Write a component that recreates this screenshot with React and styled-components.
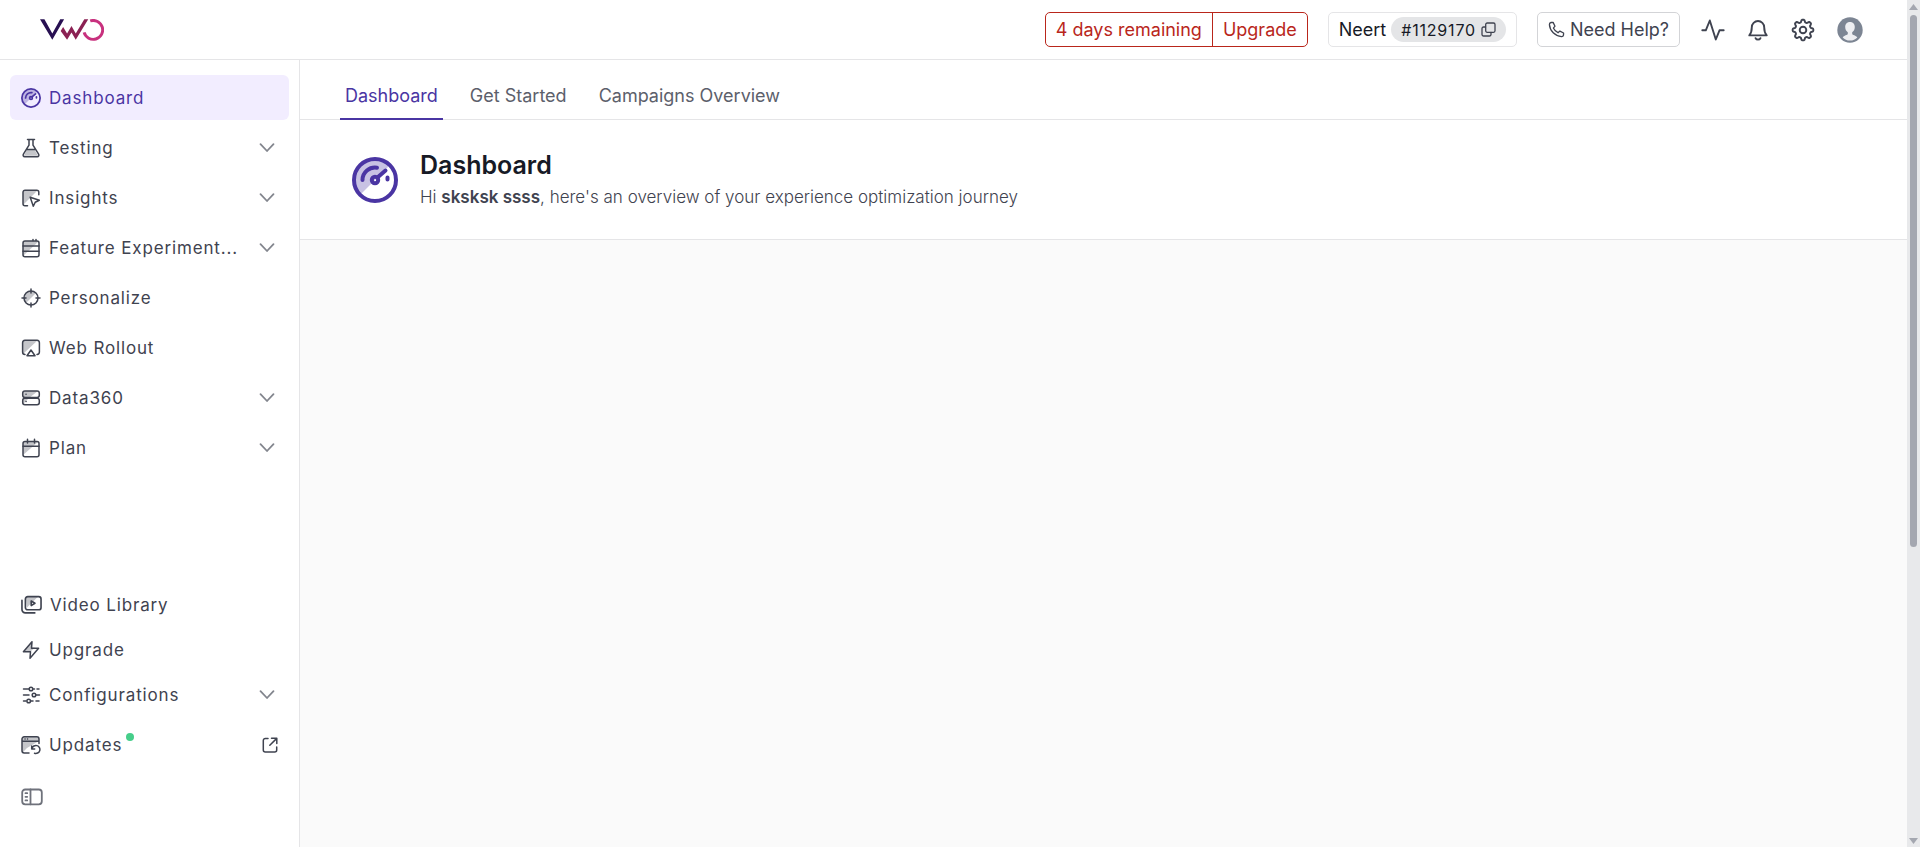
import React from "react";
import styled, { createGlobalStyle } from "styled-components";

const ink = "#3f4350";
const violet = "#4a35a3";
const line = "#e5e5e7";

const GlobalStyle = createGlobalStyle`
  *, *::before, *::after { box-sizing: border-box; }
  body { margin: 0; background: #fff; color: ${ink}; font-family: Inter, "Liberation Sans", sans-serif; font-size: 18px; }
  button { font: inherit; color: inherit; background: none; border: 0; padding: 0; cursor: pointer; }
  a { color: inherit; text-decoration: none; }
`;

const Shell = styled.div`
  display: grid;
  grid-template-columns: minmax(0, 1fr) 13px;
  min-height: 100vh;
`;
const Page = styled.div`
  display: flex;
  flex-direction: column;
`;
const Header = styled.header`
  display: flex;
  align-items: center;
  gap: 20px;
  height: 60px;
  padding: 0 42px 0 40px;
  border-bottom: 1px solid ${line};
`;
const Brand = styled.a`
  display: flex;
  margin-right: auto;
`;
const Trial = styled.div`
  display: flex;
  height: 35px;
  color: #b9261b;
  border: 1px solid #b9261b;
  border-radius: 5px;
`;
const TrialButton = styled.button`
  padding: 0 10px;
  & + & { border-left: 1px solid #b9261b; }
`;
const Account = styled.div`
  display: flex;
  align-items: center;
  gap: 5px;
  height: 35px;
  padding: 0 10px;
  border: 1px solid ${line};
  border-radius: 5px;
  color: #171a26;
`;
const AccountId = styled.button`
  display: flex;
  align-items: center;
  gap: 5px;
  height: 25px;
  padding: 0 10px;
  border-radius: 13px;
  background: #e4e5e7;
  font-size: 16px;
  letter-spacing: 0.05em;
  svg { color: ${ink}; }
`;
const HelpButton = styled.button`
  display: flex;
  align-items: center;
  gap: 5px;
  height: 35px;
  padding: 0 10px;
  border: 1px solid #d3d4d7;
  border-radius: 5px;
`;
const IconButton = styled.button`
  display: flex;
  align-items: center;
  justify-content: center;
  width: ${(p) => (p.$wide ? 30 : 25)}px;
  height: 30px;
`;
const Body = styled.div`
  display: grid;
  grid-template-columns: 300px minmax(0, 1fr);
  flex: 1;
`;
const Sidebar = styled.aside`
  display: flex;
  flex-direction: column;
  justify-content: space-between;
  padding: 15px 10px 20px;
  border-right: 1px solid ${line};
`;
const Nav = styled.nav`
  display: flex;
  flex-direction: column;
  gap: ${(p) => p.$gap}px;
`;
const NavItem = styled.a`
  display: flex;
  align-items: center;
  gap: 8px;
  height: 45px;
  padding: 0 11px;
  border-radius: 6px;
  font-size: 17px;
  letter-spacing: 0.05em;
  color: ${(p) => (p.$active ? violet : ink)};
  background: ${(p) => (p.$active ? "#f2edff" : "transparent")};
  ${(p) => p.$spaced && "margin-top: 5px;"}
`;
const NavLabel = styled.span`
  display: flex;
  gap: 4px;
  flex: 1;
  line-height: 24px;
  white-space: nowrap;
`;
const Dot = styled.i`
  width: 8px;
  height: 8px;
  border-radius: 50%;
  background: #46ce8a;
`;
const Trailing = styled.span`
  display: flex;
  justify-content: flex-end;
  padding-right: ${(p) => (p.$external ? 0 : 2)}px;
`;
const Collapse = styled.button`
  display: flex;
  align-items: center;
  height: 60px;
  padding: 0 11px;
`;
const Main = styled.main`
  display: flex;
  flex-direction: column;
  background: #fafafa;
`;
const Tabs = styled.nav`
  display: flex;
  gap: 22px;
  height: 60px;
  padding: 0 40px;
  background: #fff;
  border-bottom: 1px solid ${line};
`;
const Tab = styled.a`
  display: flex;
  align-items: center;
  height: 60px;
  padding: 24px 5px 12px;
  border-bottom: 2px solid ${(p) => (p.$active ? violet : "transparent")};
  color: ${(p) => (p.$active ? violet : "#5c606b")};
`;
const Intro = styled.section`
  display: flex;
  align-items: center;
  gap: 22px;
  height: 120px;
  padding: 0 52px;
  background: #fff;
  border-bottom: 1px solid ${line};
`;
const IntroIcon = styled.span`
  display: flex;
  color: ${violet};
`;
const Title = styled.h1`
  margin: 0;
  font-size: 25px;
  line-height: 36px;
  font-weight: 600;
  color: #171a26;
`;
const Subtitle = styled.p`
  margin: 0;
  font-size: 17px;
  line-height: 29px;
  font-weight: 300;
  b { font-weight: 600; }
`;
const ScrollTrack = styled.div`
  display: flex;
  flex-direction: column;
  align-items: center;
  gap: 5px;
  padding: 4px 0 3px;
  background: #e8e9eb;
`;
const ScrollThumb = styled.div`
  width: 7px;
  flex: 0 0 63.3%;
  border-radius: 4px;
  background: #a4a7b0;
`;
const ScrollSpace = styled.div`
  flex: 1;
`;

const Svg = ({ w = 20, h = w, vw = w, vh = h, sw = 1.5, children }) => (
  <svg width={w} height={h} viewBox={`0 0 ${vw} ${vh}`} fill="none" stroke="currentColor"
    strokeWidth={sw} strokeLinecap="round" strokeLinejoin="round" aria-hidden="true">
    {children}
  </svg>
);
const Tint = ({ d }) => <path d={d} fill="currentColor" stroke="none" opacity="0.3" />;

const Logo = () => (
  <svg width="64" height="22" viewBox="0 0 65 22" aria-label="VWO" role="img">
    <path d="M0 0H4.5L12.5 14.5L20 1L20.5 0H24.5L12.5 21Z" fill="#281052" />
    <path d="M21 12L23.5 8L27.5 14.5L32 7L36.3 14.5L45 0H49L36.3 21L32 13.5L27.5 21Z" fill="#8b2153" />
    <path d="M51 1.8A9.6 9.6 0 1 1 44.8 13.5" fill="none" stroke="#c8317e" strokeWidth="3" />
  </svg>
);
const Gauge = ({ size }) => (
  <Svg w={size} vw={46} vh={46} sw={4}>
    <Tint d="M8 38A21 21 0 1 1 38 8Z" />
    <circle cx="23" cy="23" r="21" />
    <path d="M10.5 23A12.5 12.5 0 0 1 25 10.7M33.5 13.5L26 20M35.5 20.5V22.5" />
    <circle cx="23" cy="23" r="3.2" />
  </Svg>
);
const Flask = () => (
  <Svg>
    <Tint d="M5.8 11.5H13.5L17 17.8H3Z" />
    <path d="M6.5 1.5H13.5M8 1.5V7.2L2.4 16.2C1.7 17.5 2.3 18.7 3.7 18.7H16.3C17.7 18.7 18.3 17.5 17.6 16.2L12 7.2V1.5M5.5 11.5H14.5" />
  </Svg>
);
const Insights = () => (
  <Svg>
    <Tint d="M2 2H17L2 17Z" />
    <path d="M6.5 17.8H4A2 2 0 0 1 2 15.8V4.2A2 2 0 0 1 4 2.2H15.8A2 2 0 0 1 17.8 4.2V6.8" />
    <path d="M9.2 9.2L18.3 12.3L14.2 14.2L12.3 18.3Z" />
  </Svg>
);
const Feature = () => (
  <Svg>
    <Tint d="M2 3H18L2 18Z" />
    <rect x="2" y="3" width="16" height="15.7" rx="2" />
    <path d="M2 8H18M2 13.2H18M12 1.5V2.5M15 1.5V2.5" />
  </Svg>
);
const Target = () => (
  <Svg>
    <Tint d="M5 15A7 7 0 1 1 15 5Z" />
    <circle cx="10" cy="10" r="7" />
    <path d="M10 1V5M10 15V19M1 10H5M15 10H19" />
  </Svg>
);
const Rollout = () => (
  <Svg>
    <Tint d="M2 2H17L2 16Z" />
    <path d="M4 16.5A2.5 2.5 0 0 1 1.6 14V4.8A2.5 2.5 0 0 1 4 2.3H16A2.5 2.5 0 0 1 18.4 4.8V14A2.5 2.5 0 0 1 16 16.5M10 12L14 17.8H6Z" />
  </Svg>
);
const Data = () => (
  <Svg>
    <Tint d="M2 3H17L8 10L2 16Z" />
    <rect x="1.7" y="3" width="16.6" height="6.5" rx="2.2" />
    <rect x="1.7" y="10.3" width="16.6" height="6.5" rx="2.2" />
    <path d="M5 6.2H5.1M5 13.6H5.1" />
  </Svg>
);
const Plan = () => (
  <Svg>
    <Tint d="M2 4H17L2 17Z" />
    <rect x="2" y="3.4" width="16" height="15.4" rx="2" />
    <path d="M2 8.2H18M6.5 1.2V5M13.5 1.2V5" />
  </Svg>
);
const Video = () => (
  <Svg w={21} h={20} vw={22} vh={20} sw={1.7}>
    <Tint d="M5 1H18L6 13Z" />
    <rect x="4.6" y="1.2" width="16.4" height="13.8" rx="2.5" />
    <path d="M1 5V14.5A3.6 3.6 0 0 0 4.6 18.3H14.5M10.7 5.8V10.6L14.6 8.2Z" />
  </Svg>
);
const Bolt = () => (
  <Svg>
    <Tint d="M10 2V7.5H14L9 12H3Z" />
    <path d="M11 1.7L2.4 11.8H9.5L9 18.3L17.6 8.2H10.5Z" />
  </Svg>
);
const Sliders = () => (
  <Svg>
    <path d="M2.5 4H8M12.5 4H13.5M16 4H18M2.5 10H8M15.2 10H18.5M2.5 16H5M10 16H12M15 16H18" />
    <circle cx="10" cy="4" r="1.8" /><circle cx="13" cy="10" r="1.8" /><circle cx="7.7" cy="16" r="1.8" />
  </Svg>
);
const Updates = () => (
  <Svg>
    <Tint d="M1 2H18V6L6 13L1 18Z" />
    <path d="M8 18H3.2A2.2 2.2 0 0 1 1 15.8V4A2.2 2.2 0 0 1 3.2 1.8H15.8A2.2 2.2 0 0 1 18 4V8.5M1 6.2H18M4 4H4.1M6.5 4H6.6" />
    <path d="M10.7 11V14H13.7M11 13.5A4 4 0 1 1 13.5 18.2" />
  </Svg>
);
const Chevron = () => <Svg w={18} h={12} sw={1.8}><g opacity="0.65"><path d="M2.5 2.2L9 9L15.5 2.2" /></g></Svg>;
const External = () => (
  <Svg w={16}>
    <path d="M6 1.5H3.3A2 2 0 0 0 1.3 3.5V13A2 2 0 0 0 3.3 15H12.7A2 2 0 0 0 14.7 13V10M9.5 1.3H14.8V6.5M14.5 1.6L7.8 8.3" />
  </Svg>
);
const Panel = () => (
  <Svg w={22} h={18} sw={1.8}>
    <g opacity="0.75"><rect x="1.2" y="1.5" width="19.6" height="14.8" rx="3" /><path d="M9.5 1.5V16.3M4.5 5.2H6.2M4.5 8.8H6.2M4.5 12.4H6.2" /></g>
  </Svg>
);
const Copy = () => (
  <Svg w={15} sw={1.3}>
    <rect x="4.7" y="1" width="9.3" height="9.3" rx="1.5" />
    <path d="M4.5 5H2.5A1.5 1.5 0 0 0 1 6.5V12.5A1.5 1.5 0 0 0 2.5 14H8.5A1.5 1.5 0 0 0 10 12.5V10.5" />
  </Svg>
);
const Phone = () => (
  <Svg w={17} vw={18} vh={18} sw={1.4}>
    <path d="M3.2 1.6L5.4 1.5L7.4 5.5L5.7 7.5C6.7 9.7 8.4 11.4 10.6 12.4L12.6 10.7L16.5 12.7L16.4 14.9C16.2 16 15.3 16.6 14.2 16.5C7.5 16 2 10.5 1.5 3.8C1.4 2.7 2.1 1.8 3.2 1.6Z" />
  </Svg>
);
const Pulse = () => <Svg w={24} sw={1.9}><path d="M1.3 12.3H4.8L8.8 2.5L14.8 21.5L18.5 12.3H22.7" /></Svg>;
const Bell = () => (
  <Svg w={20} h={22} sw={1.9}>
    <path d="M1.3 16.4C3 14.4 3.8 12.2 3.8 8.2A6.2 6.2 0 0 1 16.2 8.2C16.2 12.2 17 14.4 18.7 16.4ZM7.6 19.2C8.6 21 11.4 21 12.4 19.2" />
  </Svg>
);
const gearOutline = Array.from({ length: 96 }, (_, i) => {
  const angle = (i / 96) * Math.PI * 2;
  const radius = 9.1 + 1.3 * Math.tanh(2 * Math.cos(angle * 8));
  return `${i ? "L" : "M"}${(12 + radius * Math.cos(angle)).toFixed(2)} ${(12 + radius * Math.sin(angle)).toFixed(2)}`;
}).join("") + "Z";
const Gear = () => <Svg w={24} sw={1.9}><path d={gearOutline} /><circle cx="12" cy="12" r="3.3" /></Svg>;
const Avatar = () => (
  <svg width="26" height="26" viewBox="0 0 26 26" aria-hidden="true">
    <circle cx="13" cy="13" r="12.7" fill="#7c8593" />
    <path d="M13 5C9.8 5 8.2 7.2 8.2 10C8.2 12.4 9.3 14.2 10.8 15.3V17C10.8 17.9 6.8 18.4 5.7 20.4C7.5 22.4 10 23.5 13 23.5S18.5 22.4 20.3 20.4C19.2 18.4 15.2 17.9 15.2 17V15.3C16.7 14.2 17.8 12.4 17.8 10C17.8 7.2 16.2 5 13 5Z" fill="#edeef1" />
  </svg>
);
const Arrow = ({ down }) => (
  <svg width="9" height="6" viewBox="0 0 9 6" aria-hidden="true">
    <path d={down ? "M0 0H9L4.5 6Z" : "M0 6H9L4.5 0Z"} fill="#a4a7b0" />
  </svg>
);

const primary = [
  { label: "Dashboard", icon: <Gauge size={20} />, active: true },
  { label: "Testing", icon: <Flask />, expands: true },
  { label: "Insights", icon: <Insights />, expands: true },
  { label: "Feature Experiment...", icon: <Feature />, expands: true },
  { label: "Personalize", icon: <Target /> },
  { label: "Web Rollout", icon: <Rollout /> },
  { label: "Data360", icon: <Data />, expands: true },
  { label: "Plan", icon: <Plan />, expands: true },
];
const secondary = [
  { label: "Video Library", icon: <Video /> },
  { label: "Upgrade", icon: <Bolt /> },
  { label: "Configurations", icon: <Sliders />, expands: true },
  { label: "Updates", icon: <Updates />, external: true, dot: true, spaced: true },
];

const Item = ({ label, icon, active, expands, external, dot, spaced }) => (
  <NavItem href="#" $active={active} $spaced={spaced} aria-current={active ? "page" : undefined}>
    {icon}
    <NavLabel>{label}{dot && <Dot />}</NavLabel>
    {(expands || external) && <Trailing $external={external}>{external ? <External /> : <Chevron />}</Trailing>}
  </NavItem>
);

export default function App() {
  return (
    <Shell>
      <GlobalStyle />
      <Page>
        <Header>
          <Brand href="#"><Logo /></Brand>
          <Trial>
            <TrialButton>4 days remaining</TrialButton>
            <TrialButton>Upgrade</TrialButton>
          </Trial>
          <Account>
            Neert
            <AccountId>#1129170<Copy /></AccountId>
          </Account>
          <HelpButton><Phone />Need Help?</HelpButton>
          <IconButton aria-label="Activity"><Pulse /></IconButton>
          <IconButton aria-label="Notifications"><Bell /></IconButton>
          <IconButton aria-label="Settings"><Gear /></IconButton>
          <IconButton $wide aria-label="Profile"><Avatar /></IconButton>
        </Header>
        <Body>
          <Sidebar>
            <Nav $gap={5} aria-label="Products">
              {primary.map((item) => <Item key={item.label} {...item} />)}
            </Nav>
            <Nav $gap={0} aria-label="Account">
              {secondary.map((item) => <Item key={item.label} {...item} />)}
              <Collapse aria-label="Collapse sidebar"><Panel /></Collapse>
            </Nav>
          </Sidebar>
          <Main>
            <Tabs aria-label="Sections">
              <Tab href="#" $active>Dashboard</Tab>
              <Tab href="#">Get Started</Tab>
              <Tab href="#">Campaigns Overview</Tab>
            </Tabs>
            <Intro>
              <IntroIcon><Gauge size={46} /></IntroIcon>
              <div>
                <Title>Dashboard</Title>
                <Subtitle>Hi <b>sksksk ssss</b>, here's an overview of your experience optimization journey</Subtitle>
              </div>
            </Intro>
          </Main>
        </Body>
      </Page>
      <ScrollTrack>
        <Arrow />
        <ScrollThumb />
        <ScrollSpace />
        <Arrow down />
      </ScrollTrack>
    </Shell>
  );
}
